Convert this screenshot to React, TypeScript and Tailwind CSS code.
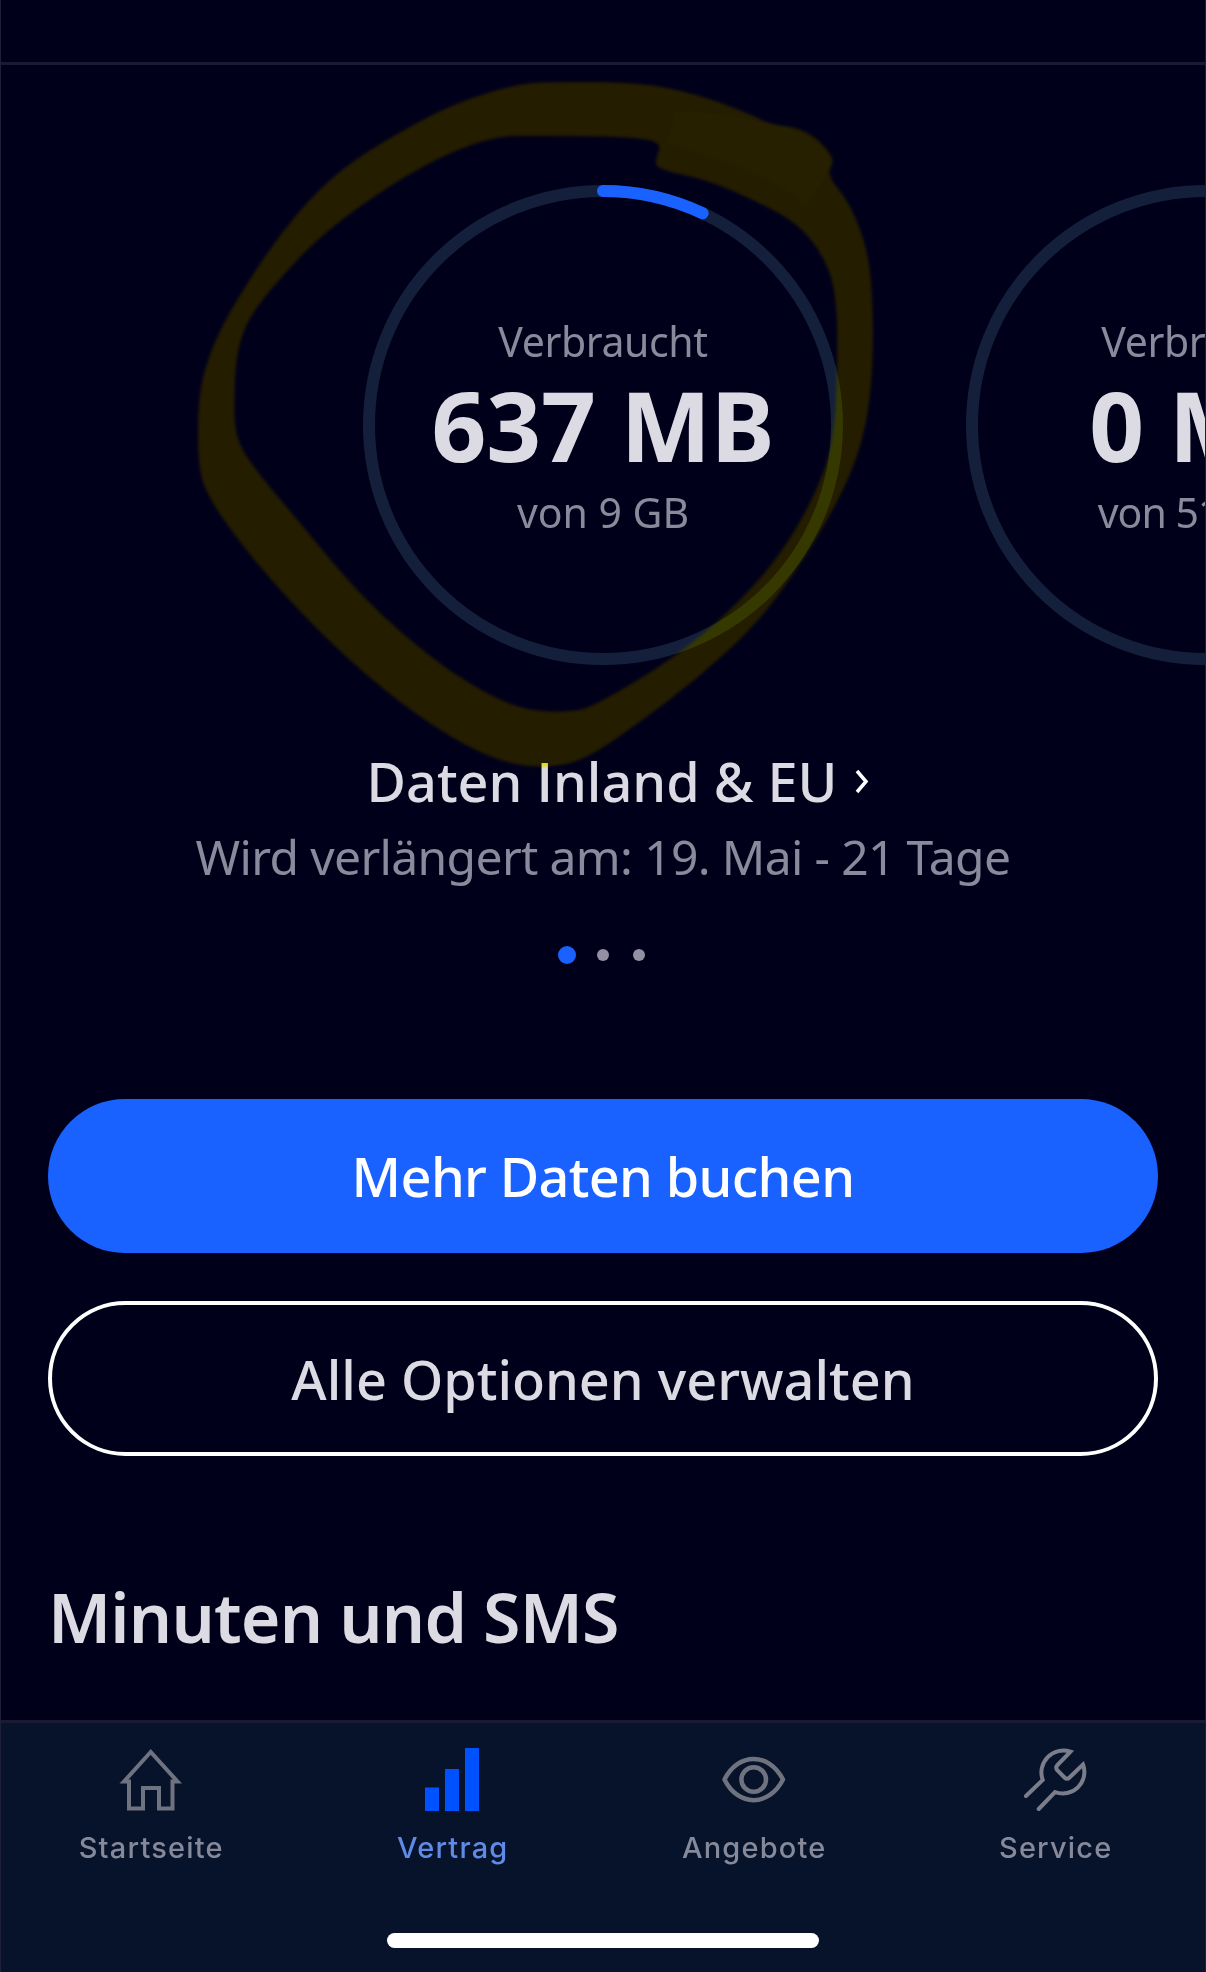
import type { ReactNode } from "react";

const CIRCUMFERENCE = 2 * Math.PI * 234;

type Point = [number, number];

const markerOuter: Point[] = [
  [520, 83], [455, 103], [400, 132], [354, 160], [318, 190], [281, 233], [249, 280], [221, 327],
  [205, 367], [198, 403], [198, 467], [208, 497], [240, 543], [286, 597], [341, 653], [400, 703],
  [455, 740], [497, 760], [529, 767], [561, 766], [589, 757], [639, 723], [699, 677], [754, 627],
  [795, 573], [832, 513], [857, 460], [869, 410], [873, 360], [873, 310], [869, 253], [850, 203],
  [826, 174], [836, 160], [816, 137], [795, 127], [772, 125], [745, 112], [708, 98], [662, 86],
  [616, 82], [560, 82],
];

const markerInner: Point[] = [
  [501, 136], [460, 148], [410, 173], [354, 210], [313, 243], [276, 283], [249, 317], [237, 350],
  [234, 393], [235, 437], [253, 467], [295, 517], [364, 600], [437, 663], [492, 697], [529, 711],
  [570, 712], [593, 707], [676, 657], [731, 610], [777, 560], [813, 500], [834, 443], [838, 360],
  [836, 290], [822, 253], [797, 223], [758, 202], [708, 180], [656, 169], [656, 158], [662, 142],
  [630, 137], [580, 136], [530, 136],
];

// Closed curve through the midpoints of the given points
function smooth(points: Point[]) {
  const mid = (a: Point, b: Point) => `${(a[0] + b[0]) / 2} ${(a[1] + b[1]) / 2}`;
  const last = points[points.length - 1];
  let d = `M${mid(last, points[0])}`;
  points.forEach((p, i) => {
    d += `Q${p[0]} ${p[1]} ${mid(p, points[(i + 1) % points.length])}`;
  });
  return d + "Z";
}

const markerPath = smooth(markerOuter) + smooth(markerInner);

function UsageRing({
  used,
  total,
  percent,
  totalClass = "",
}: {
  used: string;
  total: string;
  percent: number;
  totalClass?: string;
}) {
  return (
    <div className="relative w-[480px] h-[480px] shrink-0">
      <svg className="block" width="480" height="480" viewBox="0 0 480 480" fill="none">
        <circle cx="240" cy="240" r="234" stroke="#14203b" strokeWidth="12" />
        {percent > 0 && (
          <circle
            cx="240"
            cy="240"
            r="234"
            stroke="#1a62ff"
            strokeWidth="12"
            strokeLinecap="round"
            strokeDasharray={`${(CIRCUMFERENCE * percent) / 100} ${CIRCUMFERENCE}`}
            transform="rotate(-90 240 240)"
          />
        )}
      </svg>
      <div className="absolute inset-0 flex flex-col items-center whitespace-nowrap pt-[126px]">
        <p className="text-[41px] leading-[60px] tracking-[-0.4px] text-[#8b8a9c]">Verbraucht</p>
        <p className="text-[96px] leading-[108px] font-bold tracking-[-0.2px] text-[#dcdbe3]">{used}</p>
        <p className={`pt-[3px] text-[41px] leading-[60px] text-[#8b8a9c] ${totalClass}`}>{total}</p>
      </div>
    </div>
  );
}

// Highlighter stroke over the first ring: one layer tints, the other drops the blue
function MarkerLayer({ className, fill, overlap }: { className: string; fill: string; overlap?: string }) {
  return (
    <svg
      className={`absolute left-0 top-0 pointer-events-none ${className}`}
      width="1206"
      height="800"
      viewBox="0 0 1206 800"
    >
      <g className="blur-[1.5px]">
        <path fill={fill} fillRule="evenodd" d={markerPath} />
        {overlap && (
          <path
            fill={overlap}
            d="M676 112C715 112 750 120 785 127C810 135 828 150 831 162L824 178L806 205C780 180 730 160 668 143Z"
          />
        )}
      </g>
    </svg>
  );
}

function NavItem({
  label,
  active,
  children,
}: {
  label: string;
  active?: boolean;
  children: ReactNode;
}) {
  return (
    <a
      className={`flex flex-1 flex-col items-center pt-6 ${
        active ? "text-[#5f8ae6]" : "text-[#85899a]"
      }`}
    >
      {children}
      <span className="mt-[15px] pl-px font-[Inter,sans-serif] text-[29px] leading-10 font-medium tracking-[1.2px]">
        {label}
      </span>
    </a>
  );
}

export default function App() {
  return (
    <div className="relative isolate flex h-[1972px] w-[1206px] flex-col overflow-hidden bg-[#00001a] font-['Noto_Sans',sans-serif]">
      <header className="h-[65px] shrink-0 border-b-3 border-[#1a1a36]" />

      <main className="flex flex-1 flex-col">
        <section className="flex flex-col items-center">
          <div className="flex w-full gap-[123px] overflow-hidden pl-[363px] pt-[120px]">
            <UsageRing used="637 MB" total="von 9 GB" percent={7} />
            <UsageRing used="0 MB" total="von 512 MB" percent={0} totalClass="tracking-[-1px]" />
          </div>
          <div className="mt-[78px] flex items-center gap-[18px] pl-[32px]">
            <h2 className="text-[54px] leading-[76px] font-medium text-[#dcdbe3]">
              Daten <span className="font-['Open_Sans',sans-serif] font-semibold">I</span>nland &amp; EU
            </h2>
            <svg width="16" height="26" viewBox="0 0 16 26" fill="none">
              <path d="M2 3l9 10.5L2 24" stroke="#fff" strokeWidth="3.5" />
            </svg>
          </div>
          <p className="mt-[2px] text-[48px] leading-[72px] tracking-[-0.65px] text-[#8b8a9c]">
            Wird verlängert am: 19. Mai - 21 Tage
          </p>
          <div className="mt-[53px] flex items-center pr-[4px]">
            <span className="size-[18px] rounded-full bg-[#1a62ff]" />
            <span className="ml-[21px] size-3 rounded-full bg-[#9290a2]" />
            <span className="ml-6 size-3 rounded-full bg-[#9290a2]" />
          </div>
        </section>

        <section className="mt-[135px] flex flex-col gap-12 px-12">
          <button className="h-[154px] rounded-full bg-[#1a62ff] text-[54px] font-medium tracking-[-0.65px] text-white">
            Mehr Daten buchen
          </button>
          <button className="h-[155px] rounded-full border-4 border-white pt-px text-[54px] font-medium text-[#dcdbe3]">
            Alle Optionen verwalten
          </button>
        </section>

        <h1 className="mt-[111px] pl-12 text-[68px] leading-[100px] font-semibold tracking-[-0.8px] text-[#dcdbe3]">
          Minuten und SMS
        </h1>
      </main>

      <nav className="flex h-[252px] shrink-0 flex-col items-center border-t-3 border-[#1a1a36] bg-[#06132a]">
        <div className="flex w-full flex-1">
          <NavItem label="Startseite">
            <svg width="66" height="66" viewBox="0 0 66 66" fill="none" stroke="#6f727f" strokeWidth="4">
              <path d="M32.7 5L6 34.5h5v27h14V41h16v20.5h13.5v-27h5z" />
            </svg>
          </NavItem>
          <NavItem label="Vertrag" active>
            <svg width="66" height="66" viewBox="0 0 66 66" fill="#0052ff">
              <path d="M6 40.5h14V64H6zM26 22h14v42H26zM46 1h14v63H46z" />
            </svg>
          </NavItem>
          <NavItem label="Angebote">
            <svg width="66" height="66" viewBox="0 0 66 66" fill="none" stroke="#6f727f" strokeWidth="4.5">
              <path d="M3.5 32.5C17 5 48 5 62 32.5C48 60 17 60 3.5 32.5z" strokeLinejoin="round" />
              <circle cx="32.7" cy="32.5" r="12.3" />
            </svg>
          </NavItem>
          <NavItem label="Service">
            <svg
              width="66"
              height="66"
              viewBox="-1 0 66 66"
              fill="none"
              stroke="#7b7e8a"
              strokeWidth="4"
              strokeLinecap="round"
            >
              <path d="M3 49L19.7 33A22 22 0 0 1 47.5 4.7L34.5 18Q32 20.5 34.5 23.5L41.5 30.5Q44 33 46.5 30.5L60 17.5A21.5 21.5 0 0 1 32 45L15.7 62" />
            </svg>
          </NavItem>
        </div>
        <div className="mb-6 h-[15px] w-[432px] shrink-0 rounded-full bg-white" />
      </nav>

      <MarkerLayer className="mix-blend-screen" fill="#241d00" overlap="#272000" />
      <MarkerLayer className="mix-blend-multiply" fill="#ffff00" />
      <div className="pointer-events-none absolute inset-0 border-x border-[#1d2038]" />
    </div>
  );
}
